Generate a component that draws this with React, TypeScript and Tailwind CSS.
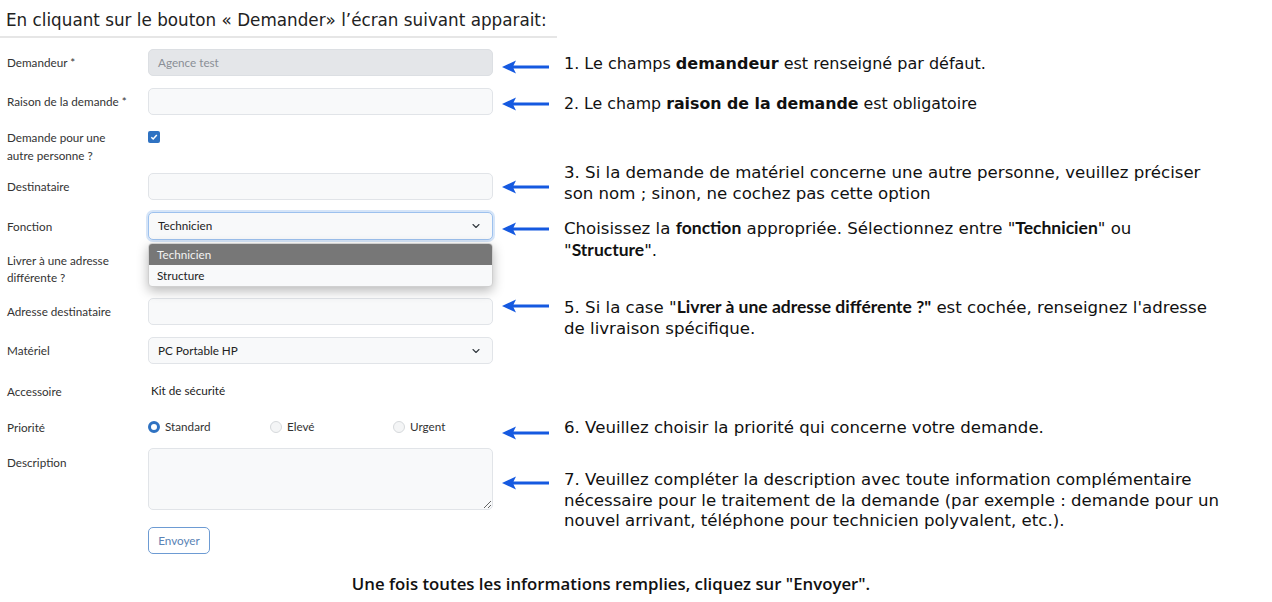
import { ChevronDown } from "lucide-react";

const form = { fontFamily: 'Lato, "Noto Sans", sans-serif' };
const wide = { fontFamily: '"DejaVu Sans", "Noto Sans", sans-serif' };
const semi = { fontFamily: '"Open Sans", "Noto Sans", sans-serif' };
const strong = { fontFamily: 'Lato, "Noto Sans", sans-serif' };

function Arrow({ mt }: { mt: string }) {
  return (
    <svg width="47" height="14" viewBox="0 0 47 14" className={`shrink-0 ${mt}`}>
      <path d="M0 7 L14 0.5 L11.5 5.5 L47 5.5 L47 8.5 L11.5 8.5 L14 13.5 Z" fill="#1559e0" />
    </svg>
  );
}

function B({ children }: { children: React.ReactNode }) {
  return (
    <b className="font-bold text-[17.5px]" style={strong}>
      {children}
    </b>
  );
}

function Note({
  arrow,
  text,
  children,
  size = "text-[16.6px]",
}: {
  arrow: string;
  text: string;
  children: React.ReactNode;
  size?: string;
}) {
  return (
    <div className="flex items-start ml-[9px]">
      <Arrow mt={arrow} />
      <p
        className={`ml-[15px] w-[700px] ${size} leading-[20.5px] text-[#111] ${text}`}
        style={wide}
      >
        {children}
      </p>
    </div>
  );
}

function Row({
  label,
  h,
  children,
  note,
  top = false,
}: {
  label: React.ReactNode;
  h: string;
  children?: React.ReactNode;
  note?: React.ReactNode;
  top?: boolean;
}) {
  return (
    <div className={`flex ${h}`}>
      <div
        className={`w-[141px] shrink-0 flex ${top ? "items-start" : "items-center"} text-[11.7px] leading-[17px] text-[#333]`}
        style={form}
      >
        {label}
      </div>
      <div className="w-[345px] shrink-0 relative">{children}</div>
      {note}
    </div>
  );
}

const input =
  "h-full w-full rounded-[5px] border border-[#e1e4e8] bg-[#f8f9fa]";

export default function App() {
  return (
    <div className="w-[1272px] h-[602px] bg-white overflow-hidden relative">
      <div className="w-[557px] border-b-2 border-[#e6e6e6] pl-[6px] pt-[9px] pb-[5px]">
        <h1 className="text-[16.8px] leading-[22px] text-[#222]" style={wide}>
          En cliquant sur le bouton « Demander» l’écran suivant apparait:
        </h1>
      </div>

      <div className="pl-[7px] pt-[11px] flex flex-col gap-3">
        <Row
          label="Demandeur *"
          h="h-[27px]"
          note={
            <Note arrow="mt-[11px]" text="mt-[5px]" size="text-[16px]">
              1. Le champs <b className="font-bold">demandeur</b> est renseigné par défaut.
            </Note>
          }
        >
          <div className="h-full w-full rounded-[5px] border border-[#dcdfe3] bg-[#e4e6e9] flex items-center pl-[9px] text-[11.7px] text-[#8a8f96]" style={form}>
            Agence test
          </div>
        </Row>

        <Row
          label="Raison de la demande *"
          h="h-[27px]"
          note={
            <Note arrow="mt-[9px]" text="mt-[6px]" size="text-[15.8px]">
              2. Le champ <b className="font-bold">raison de la demande</b> est obligatoire
            </Note>
          }
        >
          <div className={input} />
        </Row>

        <Row
          label={
            <span className="leading-[18px] mt-[1px]">
              Demande pour une
              <br />
              autre personne ?
            </span>
          }
          h="h-[34px]"
          top
        >
          <div className="mt-[4px] w-[12px] h-[12px] rounded-[2px] bg-[#2f72c2] flex items-center justify-center">
            <svg width="8" height="8" viewBox="0 0 8 8">
              <path d="M1.3 4.2 L3.2 6 L6.8 2" fill="none" stroke="#fff" strokeWidth="1.5" />
            </svg>
          </div>
        </Row>

        <Row
          label="Destinataire"
          h="h-[27px]"
          note={
            <Note arrow="mt-[7px]" text="mt-[-10px]">
              3. Si la demande de matériel concerne une autre personne, veuillez préciser
              <br />
              son nom ; sinon, ne cochez pas cette option
            </Note>
          }
        >
          <div className={input} />
        </Row>

        <Row
          label="Fonction"
          h="h-[28px]"
          note={
            <Note arrow="mt-[10px]" text="mt-[6px]">
              Choisissez la <B>fonction</B> appropriée. Sélectionnez entre "<B>Technicien</B>" ou
              <br />"<B>Structure</B>".
            </Note>
          }
        >
          <div
            className="h-full w-full rounded-[5px] border border-[#9dc1ee] bg-[#f8f9fa] shadow-[0_0_0_2px_#d6e5f8] flex items-center justify-between pl-[9px] pr-[10px] text-[11.7px] text-[#222]"
            style={form}
          >
            Technicien
            <ChevronDown size={12} strokeWidth={2.2} className="text-[#343a40]" />
          </div>
          <div
            className="absolute z-10 left-0 top-[31px] w-full rounded-[4px] overflow-hidden border border-[#d0d0d0] bg-[#f8f9fa] shadow-[0_4px_12px_rgba(0,0,0,0.28)] text-[11.7px]"
            style={form}
          >
            <div className="h-[21px] bg-[#777] text-[#f3f3f3] flex items-center pl-[8px]">Technicien</div>
            <div className="h-[21px] text-[#222] flex items-center pl-[8px]">Structure</div>
          </div>
        </Row>

        <Row
          label={
            <span>
              Livrer à une adresse
              <br />
              différente ?
            </span>
          }
          h="h-[34px]"
        />

        <Row
          label="Adresse destinataire"
          h="h-[27px]"
          note={
            <Note arrow="mt-[1px]" text="mt-[-1px]">
              5. Si la case "<B>Livrer à une adresse différente ?"</B> est cochée, renseignez l'adresse
              <br />
              de livraison spécifique.
            </Note>
          }
        >
          <div className={input} />
        </Row>

        <Row label="Matériel" h="h-[27px]">
          <div
            className="h-full w-full rounded-[5px] border border-[#e1e4e8] bg-[#f8f9fa] flex items-center justify-between pl-[9px] pr-[10px] text-[11.7px] text-[#222]"
            style={form}
          >
            PC Portable HP
            <ChevronDown size={12} strokeWidth={2.2} className="text-[#343a40]" />
          </div>
        </Row>

        <Row label="Accessoire" h="h-[30px]">
          <div className="h-full flex items-center pl-[3px] text-[11.7px] text-[#222]" style={form}>
            Kit de sécurité
          </div>
        </Row>

        <Row
          label="Priorité"
          h="h-[18px]"
          note={
            <Note arrow="mt-[8px]" text="mt-[0px]">
              6. Veuillez choisir la priorité qui concerne votre demande.
            </Note>
          }
        >
          <div className="h-full flex items-center text-[11.7px] text-[#333]" style={form}>
            <div className="w-[122px] flex items-center gap-[5px]">
              <span className="w-[12px] h-[12px] rounded-full border-[3.5px] border-[#2f72c2] bg-white" />
              Standard
            </div>
            <div className="w-[123px] flex items-center gap-[5px]">
              <span className="w-[12px] h-[12px] rounded-full border border-[#d6d9dc] bg-[#f4f5f6]" />
              Elevé
            </div>
            <div className="flex items-center gap-[5px]">
              <span className="w-[12px] h-[12px] rounded-full border border-[#d6d9dc] bg-[#f4f5f6]" />
              Urgent
            </div>
          </div>
        </Row>

        <Row
          label={<span className="mt-[6px]">Description</span>}
          h="h-[62px]"
          top
          note={
            <Note arrow="mt-[28px]" text="mt-[22px]">
              7. Veuillez compléter la description avec toute information complémentaire
              <br />
              nécessaire pour le traitement de la demande (par exemple : demande pour un
              <br />
              nouvel arrivant, téléphone pour technicien polyvalent, etc.).
            </Note>
          }
        >
          <textarea
            readOnly
            className="block h-full w-full rounded-[5px] border border-[#e1e4e8] bg-[#f8f9fa] outline-none"
          />
        </Row>

        <Row label="" h="h-[27px] mt-[5px]">
          <button
            className="h-full w-[62px] rounded-[5px] border border-[#6d9bd3] bg-white text-[11.7px] text-[#5a83b5]"
            style={form}
          >
            Envoyer
          </button>
        </Row>
      </div>

      <p className="mt-[17px] w-[1222px] text-center text-[16.8px] font-semibold text-[#111]" style={semi}>
        Une fois toutes les informations remplies, cliquez sur "Envoyer".
      </p>
    </div>
  );
}
